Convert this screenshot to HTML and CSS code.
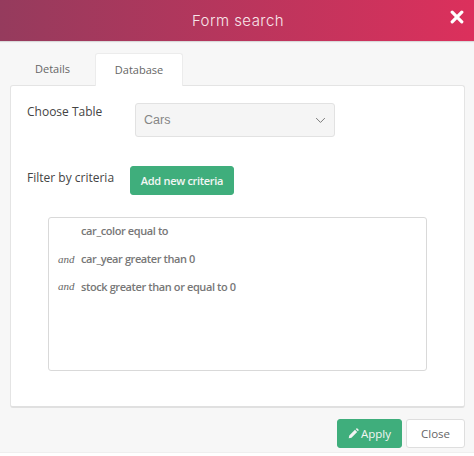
FILE: index.html
```
<!DOCTYPE html>
<html lang="en">
<head>
<meta charset="utf-8">
<title>Form search</title>
<link rel="stylesheet" href="styles.css">
</head>
<body>
<div class="modal">
  <header class="modal-head">
    <h1 class="modal-title">Form search</h1>
    <button class="close-x" aria-label="Close">
      <svg viewBox="0 0 14 14" width="14" height="14"><path d="M2.2 2.2 L11.8 11.8 M11.8 2.2 L2.2 11.8" stroke="#fff" stroke-width="3.2" stroke-linecap="round" fill="none"/></svg>
    </button>
  </header>
  <div class="modal-body">
    <nav class="tabs">
      <a class="tab">Details</a>
      <a class="tab tab-active">Database</a>
    </nav>
    <section class="panel">
      <div class="row row-table">
        <label class="label label-table">Choose Table</label>
        <div class="select"><span>Cars</span>
          <svg viewBox="0 0 12 8" width="11" height="7"><path d="M1 1.2 L6 6.2 L11 1.2" stroke="#777" stroke-width="1.1" fill="none"/></svg>
        </div>
      </div>
      <div class="row row-filter">
        <label class="label label-filter">Filter by criteria</label>
        <button class="btn btn-green btn-add">Add new criteria</button>
      </div>
      <div class="criteria">
        <div class="crit"><em class="conj"></em><span>car_color equal to</span></div>
        <div class="crit"><em class="conj">and</em><span>car_year greater than 0</span></div>
        <div class="crit"><em class="conj">and</em><span>stock greater than or equal to 0</span></div>
      </div>
    </section>
    <footer class="actions">
      <button class="btn btn-green btn-apply">
        <svg viewBox="0 0 12 12" width="11" height="11"><path d="M0.8 11.2 L1.4 8.2 L7.6 2 L10 4.4 L3.8 10.6 Z M8.4 1.2 L9.2 0.5 Q9.8 0.2 10.3 0.6 L11.4 1.7 Q11.8 2.2 11.5 2.8 L10.8 3.6 Z" fill="#f3f3f3"/></svg>
        Apply</button>
      <button class="btn btn-close">Close</button>
    </footer>
  </div>
</div>
</body>
</html>
```
FILE: styles.css
```
* { box-sizing: border-box; }
html, body { margin: 0; padding: 0; background: #fff; }
body { width: 474px; height: 456px; overflow: hidden; font-family: "Open Sans", "Noto Sans", sans-serif; }
.modal { width: 474px; height: 453px; background: #f7f7f7; display: flex; flex-direction: column; border-bottom: 1px solid #efefef; }
.modal-head { height: 41px; flex: none; display: flex; align-items: center; justify-content: center; position: relative; background: linear-gradient(90deg, #953b5d 0%, #dc305c 100%); box-shadow: 0 1px 1px rgba(0,0,0,.12); }
.modal-title { margin: 0; font-family: "Inter", sans-serif; font-weight: 300; font-size: 15px; letter-spacing: .45px; color: #f8e6ea; position: relative; left: 1px; }
.close-x { position: absolute; right: 10px; top: 10px; padding: 0; width: 14px; height: 14px; background: none; border: 0; display: flex; }
.modal-body { flex: 1; padding: 12px 9px 0 10px; display: flex; flex-direction: column; }
.tabs { height: 32px; display: flex; align-items: stretch; position: relative; z-index: 1; padding-left: 10px; }
.tab { width: 75px; padding-right: 10px; font-size: 11px; color: #666; display: flex; align-items: center; justify-content: center; padding-bottom: 1px; }
.tab-active { width: 88px; padding-right: 0; background: #fff; border: 1px solid #ececec; border-bottom: 0; border-radius: 3px 3px 0 0; margin-bottom: -1px; padding-bottom: 2px; }
.panel { height: 323px; flex: none; background: #fff; border: 1px solid #e4e4e4; border-bottom: 2px solid #e0e0e0; border-radius: 3px; padding: 17px 37px 0 16px; }
.row { display: flex; align-items: flex-start; }
.label { font-size: 12px; color: #444; line-height: 18px; }
.label-table { width: 108px; }
.select { width: 200px; height: 34px; background: #f5f5f5; border: 1px solid #e2e2e2; border-radius: 3px; display: flex; align-items: center; justify-content: space-between; padding: 0 8px; font-family: "Liberation Sans", sans-serif; font-size: 12.5px; color: #858585; }
.row-filter { margin-top: 29px; }
.label-filter { width: 103px; padding-top: 3px; }
.btn { font-family: "Open Sans", sans-serif; font-size: 11.5px; border-radius: 3px; padding: 0; display: inline-flex; align-items: center; justify-content: center; }
.btn-green { background: #3fae7c; border: 1px solid #3fae7c; color: #f3f6f4; font-weight: 600; }
.btn-add { width: 104px; height: 29px; font-size: 11px; letter-spacing: -.3px; }
.criteria { margin: 22px 0 0 21px; height: 154px; width: 379px; background: #fff; border: 1px solid #d9d9d9; border-radius: 3px; padding: 0 8px 0 9px; }
.crit { height: 27.7px; padding-bottom: 2px; display: flex; align-items: center; font-size: 11px; color: #777; font-weight: 600; letter-spacing: -.4px; }
.conj { width: 23px; flex: none; font-family: "Liberation Serif", serif; font-size: 11px; font-weight: 400; font-style: italic; letter-spacing: 0; color: #666; }
.actions { display: flex; justify-content: flex-end; gap: 4px; margin-top: 11px; }
.btn-apply { width: 65px; height: 29px; gap: 2px; font-size: 11.5px; font-weight: 500; }
.btn-close { width: 59px; height: 29px; background: #fff; border: 1px solid #dedede; color: #666; }
```
